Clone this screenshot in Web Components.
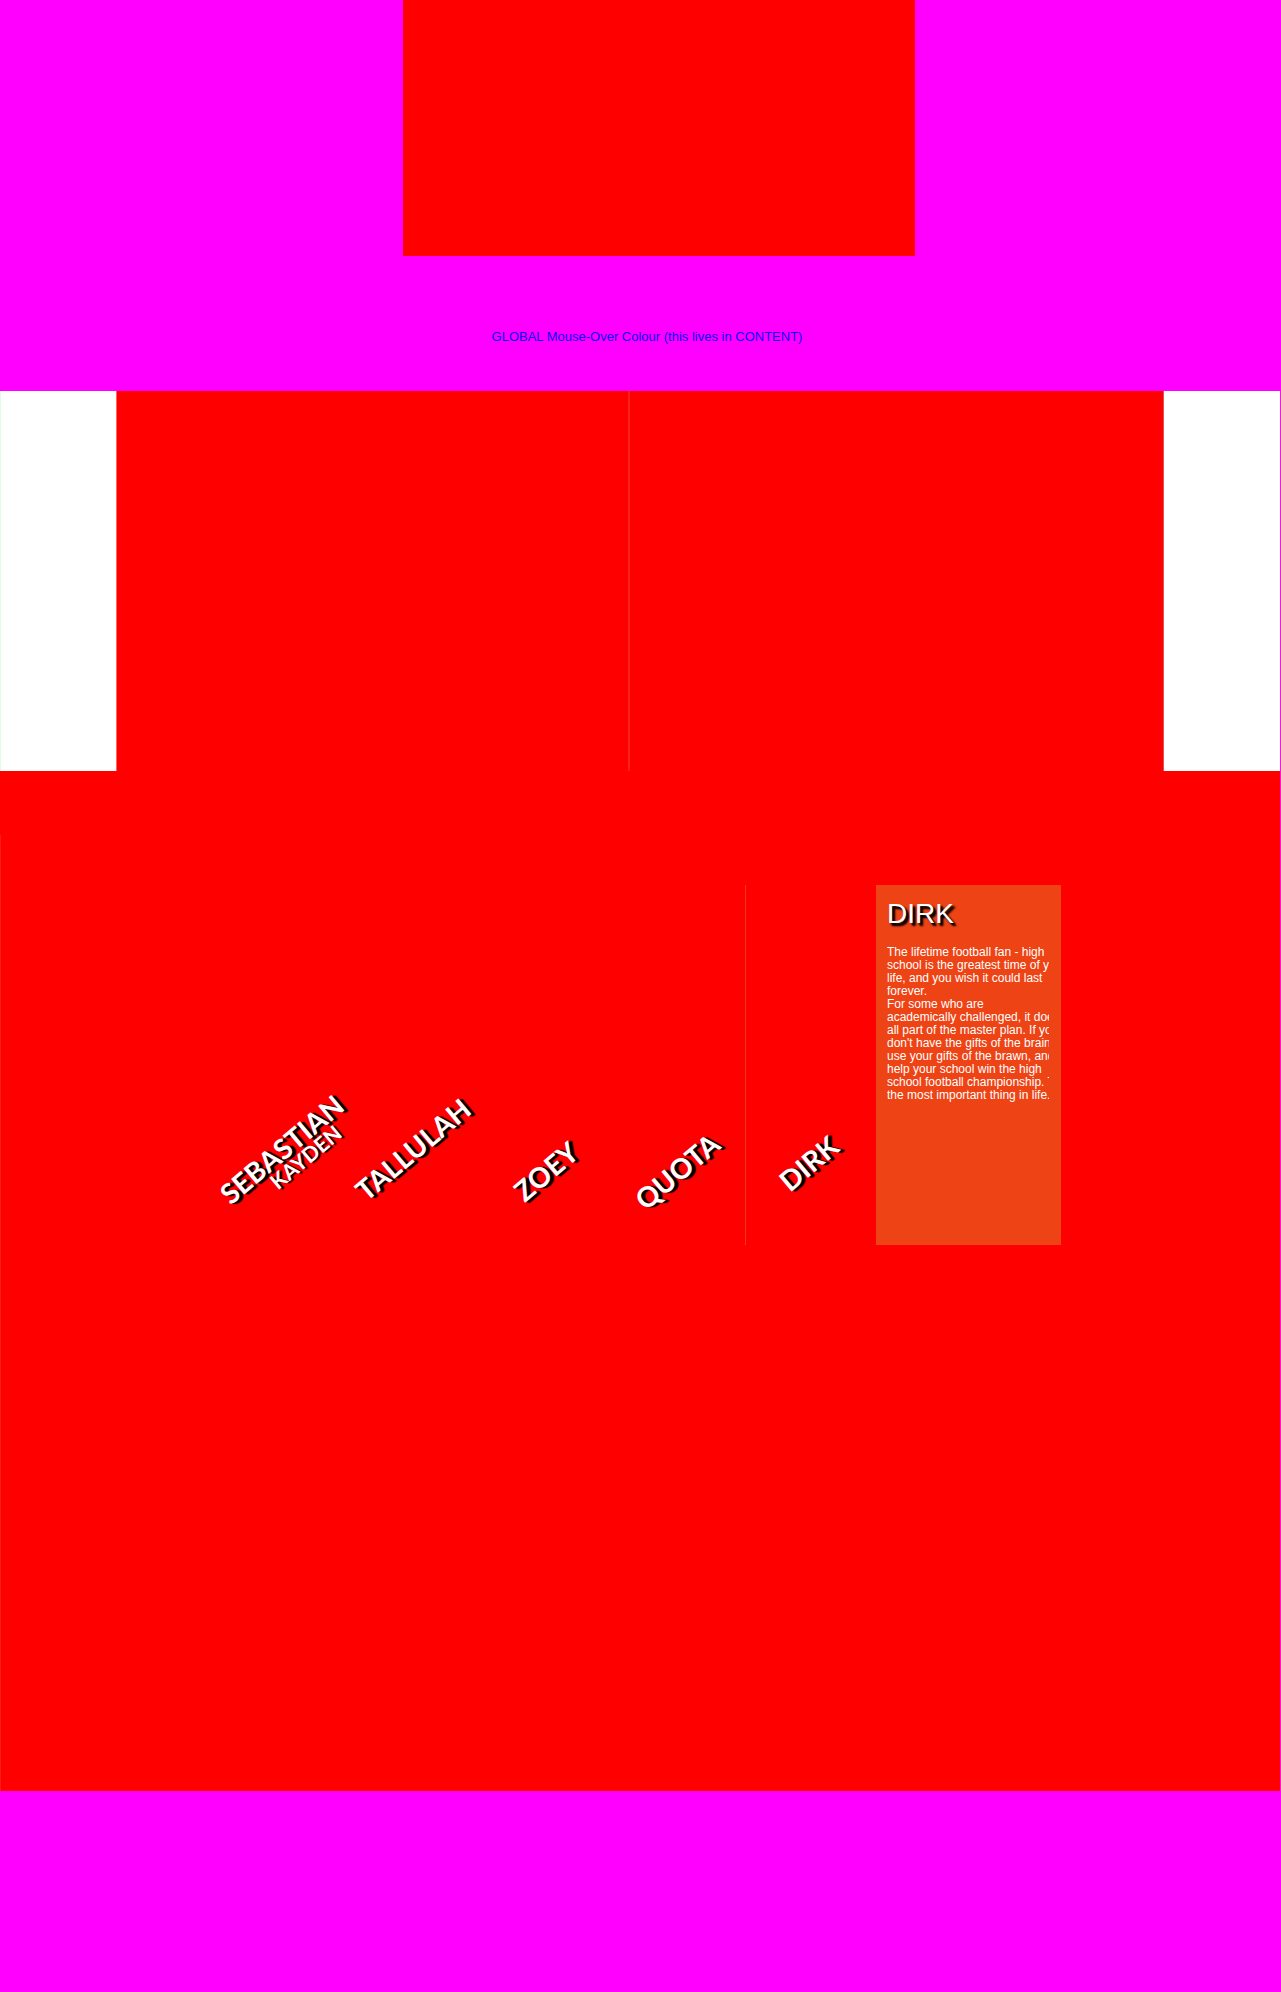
<!DOCTYPE html>
<html lang="en">
<head>
<meta charset="utf-8">
<title>Characters</title>
<style>
  html { background: #f0f; }
  body { margin: 0; font-family: "Liberation Sans", Arial, sans-serif; }
</style>
</head>
<body>
<site-page></site-page>
<script>
  const define = (name, html) => {
    const template = document.createElement('template');
    template.innerHTML = html;
    customElements.define(name, class extends HTMLElement {
      constructor() {
        super();
        this.attachShadow({ mode: 'open' }).append(template.content.cloneNode(true));
      }
    });
  };

  define('site-banner', `
    <style>
      :host { display: flex; flex-direction: column; align-items: center; height: 391px; box-sizing: border-box; padding-left: 37px; }
      .block { width: 512px; max-width: 100%; height: 256px; background: red; }
      a { margin: 73px 24px 0 0; font-size: 13px; line-height: 16px; color: #00f; text-decoration: none; }
    </style>
    <div class="block"></div>
    <a href="#content"><slot></slot></a>`);

  define('twin-gallery', `
    <style>
      :host { display: flex; justify-content: center; height: 380px; background: #fff; border-left: 1px solid #e0ffe0; padding-right: 1px; }
      .pane { background: red; box-sizing: border-box; }
      .first { flex: 0 1 514px; border-left: 1px solid #f66; border-right: 2px solid #ff1e1e; }
      .second { flex: 0 1 534px; border-right: 1px solid #d55; }
    </style>
    <div class="pane first"></div><div class="pane second"></div>`);

  define('name-card', `
    <style>
      :host { display: flex; justify-content: center; align-items: flex-end; position: relative; min-width: 0; box-sizing: border-box; padding: 0 6px 58px 0; }
      :host([tall]) { padding: 0 10px 80px 0; }
      :host([active]) { border-left: 1px solid #f43a0c; padding-bottom: 66px; }
      a { display: block; transform: rotate(-40deg); white-space: nowrap; color: #fff; text-decoration: none;
          font: 700 28px/32px Lato, sans-serif; text-shadow: 2px 2px 1px #000, 3px 3px 1px #000; }
      ::slotted(a) { position: absolute; left: 42px; bottom: 76px; transform: rotate(-40deg); white-space: nowrap;
          color: #fff; text-decoration: none; font: 700 21px/24px Lato, sans-serif; text-shadow: 2px 2px 1px #000; }
    </style>
    <a href="#character"><slot></slot></a>
    <slot name="under"></slot>`);

  define('character-bio', `
    <style>
      :host { display: block; box-sizing: border-box; background: #ee4314; padding: 12px 12px 0 11px; color: #fff; }
      h2 { margin: 0 0 15px; font-size: 28px; line-height: 34px; font-weight: 400; text-shadow: 2px 2px 2px #000, 3px 3px 2px #000; }
      .copy { overflow: hidden; white-space: pre; font-size: 12px; line-height: 13px; }
    </style>
    <h2><slot name="title"></slot></h2>
    <div class="copy"><slot></slot></div>`);

  define('character-stage', `
    <style>
      :host { display: flex; justify-content: center; align-items: flex-start; box-sizing: border-box; height: 956px; padding: 50px 0 0 1px; background: red; border-left: 1px solid #ff1a1a; }
      .row { display: grid; grid-template-columns: repeat(5, 131px) 185px; height: 360px; }
    </style>
    <div class="row">
      <name-card tall>SEBASTIAN<a slot="under" href="#kayden">KAYDEN</a></name-card>
      <name-card tall>TALLULAH</name-card>
      <name-card>ZOEY</name-card>
      <name-card>QUOTA</name-card>
      <name-card active>DIRK</name-card>
      <character-bio><span slot="title">DIRK</span>The lifetime football fan - high
school is the greatest time of your
life, and you wish it could last
forever.
For some who are
academically challenged, it does
all part of the master plan. If you
don't have the gifts of the brain,
use your gifts of the brawn, and
help your school win the high
school football championship. This is
the most important thing in life.</character-bio>
    </div>`);

  define('site-page', `
    <style>
      :host { display: block; background: #f0f; }
      main { border-right: 1px solid #f018e0; }
      .strip { height: 64px; background: red; }
      footer { height: 201px; }
    </style>
    <site-banner>GLOBAL Mouse-Over Colour (this lives in CONTENT)</site-banner>
    <main id="content">
      <twin-gallery></twin-gallery>
      <div class="strip"></div>
      <character-stage></character-stage>
    </main>
    <footer></footer>`);
</script>
</body>
</html>
